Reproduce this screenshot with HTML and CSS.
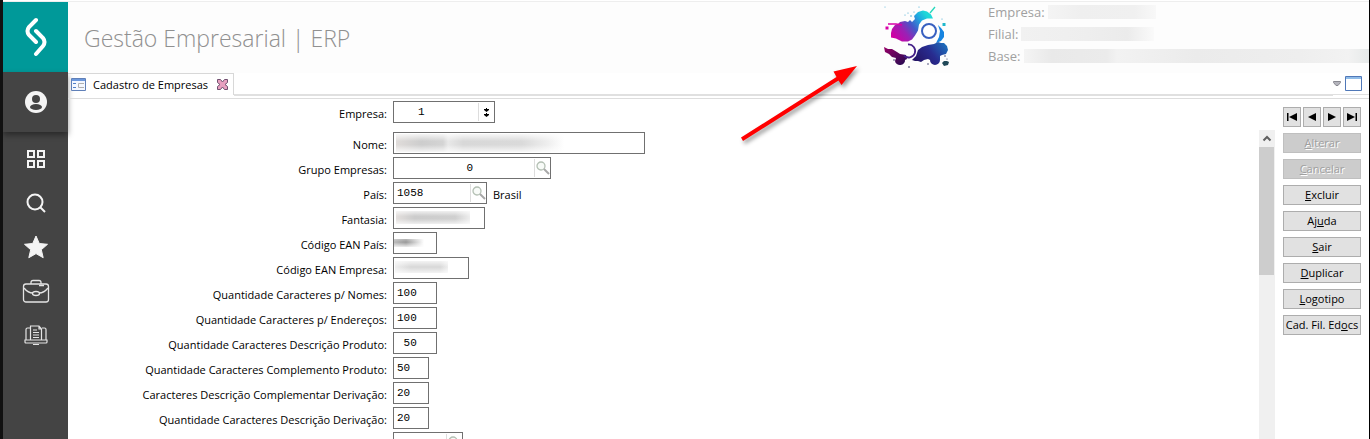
FILE: index.html
```html
<!DOCTYPE html>
<html lang="pt-BR">
<head>
    <meta charset="UTF-8">
    <meta name="viewport" content="width=device-width, initial-scale=1.0">
    <title>Gestão Empresarial | ERP</title>
    <link rel="stylesheet" href="styles.css">
</head>
<body>
    <aside class="sidebar">
        <a href="#" class="brand" aria-label="Início">
            <svg width="22" height="40" viewBox="0 0 22 40" fill="none" stroke="#fff" stroke-width="4" stroke-linecap="round">
                <path d="M11 3L4 10Q1 14 4 18L11 25"/>
                <path d="M11 14L18 21Q21 25 18 29L11 37"/>
            </svg>
        </a>
        <a href="#" class="user" aria-label="Usuário">
            <svg width="22" height="22" viewBox="0 0 22 22">
                <circle cx="11" cy="11" r="11" fill="#f4f4f4"/>
                <circle cx="11" cy="8" r="4" fill="#444"/>
                <ellipse cx="11" cy="16" rx="6" ry="3" fill="#444"/>
            </svg>
        </a>
        <nav class="menu">
            <a href="#" aria-label="Módulos">
                <svg width="20" height="20" viewBox="0 0 20 20" fill="none" stroke="#f4f4f4" stroke-width="2">
                    <path d="M2 2h6v6H2zM12 2h6v6h-6zM2 12h6v6H2zM12 12h6v6h-6z"/>
                </svg>
            </a>
            <a href="#" aria-label="Pesquisar">
                <svg width="20" height="20" viewBox="0 0 20 20" fill="none" stroke="#f4f4f4" stroke-width="2">
                    <circle cx="9" cy="9" r="7.5"/>
                    <path d="M14 14l5 5"/>
                </svg>
            </a>
            <a href="#" aria-label="Favoritos">
                <svg width="24" height="24" viewBox="0 0 24 24" fill="#f4f4f4" stroke="#f4f4f4" stroke-linejoin="round">
                    <path d="M12 1l3.300 7.500 8.200.8-6.200 5.400 1.900 8L12 18.600 4.800 22.700l1.900-8L.5 9.300l8.200-.8z"/>
                </svg>
            </a>
            <a href="#" aria-label="Processos">
                <svg width="28" height="24" viewBox="0 0 28 24" fill="none" stroke="#e4e4e4" stroke-width="1.300">
                    <rect x="1.500" y="5" width="25" height="18" rx="2.500"/>
                    <path d="M9 5V3.500Q9 1.500 11 1.500h6Q19 1.500 19 3.500V5M2 9q4 5 9 5M26 9q-4 5-9 5M17 6.500h5"/>
                    <ellipse cx="14" cy="14.500" rx="3.500" ry="2"/>
                </svg>
            </a>
            <a href="#" aria-label="Documentos">
                <svg width="24" height="20" viewBox="0 0 24 20" fill="none" stroke="#e4e4e4" stroke-width="1.200">
                    <path d="M6 3H3.500Q2 3 2 4.500V15M18 3h2.500Q22 3 22 4.500V15M1 15h22v2q0 1-1 1H2q-1 0-1-1zM9 19.500h6M6.500 15V1H15l2.500 3v11M15 1v3h2.500M9 5h4M9 7.500h6M9 10h6M9 12.500h6"/>
                </svg>
            </a>
        </nav>
    </aside>

    <div class="page">
        <header class="header">
            <h1>Gestão Empresarial | ERP</h1>
            <div class="company">
                <svg class="company-logo" width="72" height="68" viewBox="0 0 72 68">
                    <defs>
                        <linearGradient id="splash" gradientUnits="userSpaceOnUse" x1="14" y1="36" x2="46" y2="12">
                            <stop offset="0" stop-color="#d000a4"/>
                            <stop offset=".3" stop-color="#9c20b4"/>
                            <stop offset=".55" stop-color="#4458c8"/>
                            <stop offset=".8" stop-color="#20a8e0"/>
                            <stop offset="1" stop-color="#20d8d8"/>
                        </linearGradient>
                        <linearGradient id="right" gradientUnits="userSpaceOnUse" x1="36" y1="60" x2="64" y2="38">
                            <stop offset="0" stop-color="#241464"/>
                            <stop offset=".5" stop-color="#282c90"/>
                            <stop offset="1" stop-color="#1c74c0"/>
                        </linearGradient>
                        <linearGradient id="left" x1="0" y1="0" x2="1" y2="1">
                            <stop offset="0" stop-color="#980068"/>
                            <stop offset="1" stop-color="#200c50"/>
                        </linearGradient>
                    </defs>
                    <path fill="url(#splash)" d="M11 31l1-4 3-4 3-1 2-2 5-1 3 1 2-2 2 2 3-3-1-3 4-4 5-1.500 4 1 4 3 2 4-6 0-5 2-3 4-1 6-3 5-3 4-4 2-6 0-6-3-5-1z"/>
                    <path fill="none" stroke="#d800a8" stroke-width="1.500" d="M8 22h8l6 1"/>
                    <path stroke="#24d8bc" stroke-width="1.300" d="M50 11l5-6"/>
                    <path fill="#1684e0" d="M58 23l3 3 3 4 0 5-3 4-5 2 3-6 1-6z"/>
                    <path fill="url(#right)" d="M32 58l4-4 2-6 4-3 6-2 6-1 4-2 3 1 3 0 3 3 1 4-2 4-4 1-2 1 0 4a5 5 0 0 1-10 0l-2-1-4 1-3 2-3-1-3 0z"/>
                    <path fill="url(#left)" d="M4 45l4 2 4 0 5 3 3 2 6 1 1 4-2 1a5 4.500 0 0 1-10 1l1-3-4-1-3-3-4-2z"/>
                    <path fill="none" stroke="#442088" stroke-width="1.800" d="M28 42.500a6.500 6.500 0 1 1-4 11"/>
                    <circle cx="49" cy="29" r="7" fill="#fff" stroke="#3860c0" stroke-width="2"/>
                    <path fill="#20b8cc" d="M62.500 21h3v3h-3z"/>
                    <path fill="#d800a8" d="M5.500 24.500h3v3h-3z"/>
                    <g fill="#40a8d0">
                        <circle cx="31" cy="14" r=".8"/><circle cx="28" cy="11" r=".6"/><circle cx="34" cy="10" r=".6"/>
                        <circle cx="25" cy="13" r=".6"/><circle cx="39" cy="5" r=".6"/><circle cx="62" cy="17" r=".6"/>
                        <circle cx="5" cy="5" r=".5"/>
                    </g>
                    <path fill="#204858" d="M62 61l2-2 3 0 2 1-1 3-4 1z"/>
                    <g fill="#181850">
                        <circle cx="29" cy="65" r=".8"/><circle cx="14" cy="58" r=".7"/><circle cx="48" cy="62" r=".7"/>
                        <circle cx="65" cy="54" r=".7"/><circle cx="67" cy="57" r=".5"/>
                    </g>
                </svg>
                <svg class="arrow" width="130" height="90" viewBox="0 0 130 90">
                    <path fill="red" d="M11 76.500L106.500 16 103.500 10.500 127 5 111.500 24 108.500 19.500 13 80z"/>
                </svg>
                <dl class="session">
                    <div><dt>Empresa:</dt><dd class="mask mask-company"></dd></div>
                    <div><dt>Filial:</dt><dd class="mask mask-branch"></dd></div>
                    <div><dt>Base:</dt><dd class="mask mask-base"></dd></div>
                </dl>
            </div>
        </header>

        <div class="tabs">
            <div class="tab">
                <svg width="15" height="13" viewBox="0 0 15 13">
                    <path fill="#f4f8ff" stroke="#6080b8" d="M.5.500h14v12H.5z"/>
                    <path fill="#6c98dc" d="M1 1h13v2H1z"/>
                    <path stroke="#5080c8" d="M2 5.500h3M2 9.500h3"/>
                    <path fill="none" stroke="#b0b0b0" d="M13 5.500H7.500v4H13"/>
                </svg>
                <span>Cadastro de Empresas</span>
                <button type="button" class="tab-close" aria-label="Fechar">
                    <svg width="11" height="11" viewBox="0 0 11 11">
                        <path fill="#e8a0c0" stroke="#705070" d="M.5.500h3l2 2.500 2-2.500h3v3L8 5.500l2.500 2v3h-3l-2-2.500-2 2.500h-3v-3l2.500-2-2.500-2z"/>
                    </svg>
                </button>
            </div>
            <div class="tab-line"></div>
            <div class="tab-tools">
                <svg width="8" height="6" viewBox="0 0 8 6"><path fill="#b4b4bc" stroke="#888890" d="M.5.500h7v1L5 4.500H3L.5 1.500z"/></svg>
                <svg width="17" height="15" viewBox="0 0 17 15"><path fill="#fff" stroke="#5078b8" d="M.5.500h16v14H.5z"/><path fill="#90bce8" d="M1 1h15v2H1z"/></svg>
            </div>
        </div>

        <main class="content">
            <form class="form">
                <div class="row first">
                    <label for="empresa">Empresa:</label>
                    <div class="field w102">
                        <input type="text" id="empresa" class="indent" value="1">
                        <button type="button" class="spin" aria-label="Selecionar empresa">
                            <svg width="5" height="9" viewBox="0 0 5 9"><path d="M0 1h2V0h1v1h2v1L2.500 4 0 2zM0 6h2V5h1v1h2v1L2.500 9 0 7z"/></svg>
                        </button>
                    </div>
                </div>
                <div class="scroll">
                    <div class="rows">
                        <div class="row">
                            <label for="nome">Nome:</label>
                            <div class="field w252"><input type="text" id="nome" class="blot blot-nome"></div>
                        </div>
                        <div class="row">
                            <label for="grupo">Grupo Empresas:</label>
                            <div class="field w158">
                                <input type="text" id="grupo" class="number" value="0">
                                <button type="button" class="lookup" aria-label="Pesquisar grupo"><svg width="14" height="14"><use href="#lens"/></svg></button>
                            </div>
                        </div>
                        <div class="row">
                            <label for="pais">País:</label>
                            <div class="field w94">
                                <input type="text" id="pais" value="1058">
                                <button type="button" class="lookup" aria-label="Pesquisar país"><svg width="14" height="14"><use href="#lens"/></svg></button>
                            </div>
                            <output for="pais">Brasil</output>
                        </div>
                        <div class="row">
                            <label for="fantasia">Fantasia:</label>
                            <div class="field w92"><input type="text" id="fantasia" class="blot blot-fantasia"></div>
                        </div>
                        <div class="row">
                            <label for="ean-pais">Código EAN País:</label>
                            <div class="field w44"><input type="text" id="ean-pais" class="blot blot-pais"></div>
                        </div>
                        <div class="row">
                            <label for="ean-empresa">Código EAN Empresa:</label>
                            <div class="field w76"><input type="text" id="ean-empresa" class="blot blot-empresa"></div>
                        </div>
                        <div class="row">
                            <label for="nomes">Quantidade Caracteres p/ Nomes:</label>
                            <div class="field w44"><input type="text" id="nomes" value="100"></div>
                        </div>
                        <div class="row">
                            <label for="enderecos">Quantidade Caracteres p/ Endereços:</label>
                            <div class="field w44"><input type="text" id="enderecos" value="100"></div>
                        </div>
                        <div class="row">
                            <label for="desc-produto">Quantidade Caracteres Descrição Produto:</label>
                            <div class="field w44"><input type="text" id="desc-produto" value=" 50"></div>
                        </div>
                        <div class="row">
                            <label for="compl-produto">Quantidade Caracteres Complemento Produto:</label>
                            <div class="field w36"><input type="text" id="compl-produto" value="50"></div>
                        </div>
                        <div class="row">
                            <label for="compl-derivacao">Caracteres Descrição Complementar Derivação:</label>
                            <div class="field w36"><input type="text" id="compl-derivacao" value="20"></div>
                        </div>
                        <div class="row">
                            <label for="desc-derivacao">Quantidade Caracteres Descrição Derivação:</label>
                            <div class="field w36"><input type="text" id="desc-derivacao" value="20"></div>
                        </div>
                        <div class="row">
                            <span class="blank"></span>
                            <div class="field w70">
                                <input type="text" aria-label="Código">
                                <button type="button" class="lookup" aria-label="Pesquisar código"><svg width="14" height="14"><use href="#lens"/></svg></button>
                            </div>
                        </div>
                    </div>
                    <div class="scrollbar">
                        <svg width="16" height="17" viewBox="0 0 16 17" fill="none" stroke="#606060" stroke-width="2"><path d="M4.500 10.500L8 7l3.500 3.500"/></svg>
                        <div class="thumb"></div>
                    </div>
                </div>
            </form>
            <div class="actions">
                <div class="pager">
                    <button type="button" aria-label="Primeiro"><svg width="10" height="8" viewBox="0 0 10 8"><path d="M0 0h1.500v8H0zM10 0v8L2 4z"/></svg></button>
                    <button type="button" aria-label="Anterior"><svg width="8" height="8" viewBox="0 0 8 8"><path d="M8 0v8L0 4z"/></svg></button>
                    <button type="button" aria-label="Próximo"><svg width="8" height="8" viewBox="0 0 8 8"><path d="M0 0v8l8-4z"/></svg></button>
                    <button type="button" aria-label="Último"><svg width="10" height="8" viewBox="0 0 10 8"><path d="M8.500 0H10v8H8.500zM0 0v8l8-4z"/></svg></button>
                </div>
                <button type="button" disabled><u>A</u>lterar</button>
                <button type="button" disabled><u>C</u>ancelar</button>
                <button type="button"><u>E</u>xcluir</button>
                <button type="button">Aj<u>u</u>da</button>
                <button type="button"><u>S</u>air</button>
                <button type="button"><u>D</u>uplicar</button>
                <button type="button"><u>L</u>ogotipo</button>
                <button type="button">Cad. Fil. Ed<u>o</u>cs</button>
            </div>
        </main>
    </div>

    <svg class="sprite" width="0" height="0">
        <symbol id="lens" viewBox="0 0 14 14">
            <circle cx="5" cy="5" r="4" fill="#f8fbf8" stroke="#b4c0b4" stroke-width="1.300"/>
            <path stroke="#a8a8a8" stroke-width="2" d="M8 8l5 5"/>
        </symbol>
    </svg>
</body>
</html>
```

FILE: styles.css
```css
* {
    box-sizing: border-box;
}
body {
    display: flex;
    height: 100vh;
    margin: 0;
    padding-top: 2px;
    overflow: hidden;
    border-left: 3px solid #111;
    border-right: 1px solid #000;
    background: linear-gradient(#fff 1px, #eee 1px, #eee 2px, #fff 2px);
    font-family: "Open Sans", "Noto Sans", sans-serif;
    font-size: 11px;
    color: #000;
}
svg {
    display: block;
}
button {
    padding: 0;
    font: inherit;
    color: inherit;
    cursor: pointer;
}
.sprite {
    position: absolute;
}

/* sidebar */
.sidebar {
    flex: none;
    width: 65px;
    background: #444;
}
.sidebar a {
    display: flex;
    align-items: center;
    justify-content: center;
}
.sidebar .brand {
    height: 70px;
    background: #099;
}
.sidebar .user {
    height: 60px;
    box-shadow: 0 3px 6px rgba(0, 0, 0, 0.4);
}
.menu {
    padding-top: 5px;
}
.menu a {
    height: 44px;
}

/* header */
.page {
    flex: 1;
    min-width: 0;
    display: flex;
    flex-direction: column;
}
.header {
    flex: none;
    display: flex;
    justify-content: space-between;
    height: 71px;
    padding-left: 16px;
    background: #fdfdfd;
    color: #a0a0a0;
}
.header h1 {
    margin: 0;
    font-size: 23px;
    font-weight: 300;
    line-height: 72px;
    color: #909090;
    white-space: nowrap;
}
.company {
    position: relative;
    display: flex;
    flex: none;
    gap: 36px;
    width: 489px;
}
.company-logo {
    flex: none;
}
.arrow {
    position: absolute;
    top: 59px;
    left: -150px;
    filter: drop-shadow(2px 3px 2px rgba(0, 0, 0, 0.4));
}
.session {
    flex: 1;
    margin: 0;
    font-size: 13px;
    line-height: 22px;
}
.session div {
    display: flex;
    align-items: center;
    gap: 3px;
    height: 22px;
    padding-bottom: 2px;
}
.mask {
    height: 14px;
    margin: 0;
}
.mask-company {
    width: 108px;
    background: linear-gradient(90deg, #f4f4f4, #efefef 30%, #f0f0f0 80%, #f8f8f8);
}
.mask-branch {
    width: 133px;
    background: linear-gradient(90deg, #f1f1f1, #eee 50%, #ebebeb 80%, #fafafa);
}
.mask-base {
    flex: 1;
    background: linear-gradient(90deg, #f4f4f4, #e9e9e9 8%, #ebebeb 24%, #f2f2f2 27%, #ebebeb 50%, #eee 80%, #f2f2f2 94%, #e6e9e9);
}

/* tabs */
.tabs {
    flex: none;
    display: flex;
    height: 26px;
    border-bottom: 1px solid #ddd;
}
.tab {
    display: flex;
    align-items: center;
    width: 166px;
    height: 22px;
    padding-left: 3px;
    border-top: 1px solid #d8d8d8;
    border-right: 1px solid #d8d8d8;
}
.tab span {
    margin: 0 9px 0 7px;
    white-space: nowrap;
}
.tab-close {
    border: 0;
    background: none;
}
.tab-line {
    flex: 1;
    height: 23px;
    border-bottom: 2px solid #e0e0e0;
}
.tab-tools {
    display: flex;
    align-items: center;
    gap: 4px;
    height: 22px;
    padding-right: 7px;
    border-bottom: 1px solid #e0e0e0;
}

/* form */
.content {
    flex: 1;
    min-height: 0;
    display: flex;
}
.form {
    flex: 1;
    min-width: 0;
    display: flex;
    flex-direction: column;
}
.row {
    display: flex;
    flex: none;
    height: 22px;
    margin-bottom: 3px;
}
.first {
    margin: 2px 0 7px;
}
.row label,
.blank {
    width: 319px;
    text-align: right;
    line-height: 26px;
}
.row output {
    margin-left: 6px;
    line-height: 26px;
}
.field {
    display: flex;
    margin-left: 6px;
    border: 1px solid #707070;
    background: #fff;
}
.field input {
    flex: 1;
    min-width: 0;
    padding: 0 0 1px 3px;
    border: 0;
    outline: 0;
    background-color: transparent;
    background-repeat: no-repeat;
    font-family: "Liberation Mono", monospace;
    font-size: 11px;
    color: #000;
}
.field .indent {
    padding-left: 24px;
}
.field .number {
    padding-right: 61px;
    text-align: right;
}
.field button {
    display: flex;
    align-items: center;
    justify-content: center;
    width: 16px;
    margin: 1px 0;
    border: 0;
    border-left: 1px solid #ddd;
    background: none;
}
.w36 { width: 36px; }
.w44 { width: 44px; }
.w70 { width: 70px; }
.w76 { width: 76px; }
.w92 { width: 92px; }
.w94 { width: 94px; }
.w102 { width: 102px; }
.w158 { width: 158px; }
.w252 { width: 252px; }

.blot-nome {
    background-image: linear-gradient(rgba(255, 255, 255, 0.8), transparent 40%, transparent 60%, rgba(255, 255, 255, 0.8)), linear-gradient(90deg, #e0dcda, #cdcdcd 15%, #d4d4d4 28%, #e8e8e8 31%, #d8d8d8 40%, #dadada 75%, #eee 90%, #fff);
    background-position: 2px 1px;
    background-size: 168px 18px;
}
.blot-fantasia {
    background-image: linear-gradient(rgba(255, 255, 255, 0.7), transparent 40%, transparent 60%, rgba(255, 255, 255, 0.7)), linear-gradient(90deg, #e4e0de, #ccc 25%, #d0d0d0 80%, #eee);
    background-position: 2px 3px;
    background-size: 74px 13px;
}
.blot-pais {
    background-image: linear-gradient(rgba(255, 255, 255, 0.3), transparent 40%, rgba(255, 255, 255, 0.8)), linear-gradient(90deg, #b8b8b8, #989898 40%, #ccc 70%, #fff);
    background-position: 0 6px;
    background-size: 30px 8px;
}
.blot-empresa {
    background-image: linear-gradient(rgba(255, 255, 255, 0.7), transparent 50%, rgba(255, 255, 255, 0.7)), linear-gradient(90deg, #eee, #d8d8d8 30%, #d8d8d8 85%, #eee);
    background-position: 1px 3px;
    background-size: 53px 12px;
}

/* scroll area */
.scroll {
    flex: 1;
    min-height: 0;
    display: flex;
}
.rows {
    flex: 1;
    padding-top: 2px;
    overflow: hidden;
}
.scrollbar {
    width: 16px;
    background: #f0f0f0;
}
.thumb {
    width: 15px;
    height: 128px;
    background: #cdcdcd;
}

/* actions */
.actions {
    flex: none;
    display: flex;
    flex-direction: column;
    gap: 6px;
    width: 94px;
    padding: 8px 8px 0;
}
.actions button {
    height: 20px;
    border: 1px solid #adadad;
    background: #e1e1e1;
    line-height: 18px;
    white-space: nowrap;
}
.actions button:hover {
    background: #e5f1fb;
}
.actions button:disabled {
    border-color: #bfbfbf;
    background: #ccc;
    color: #a0a0a0;
    text-shadow: 1px 1px #fff;
    cursor: default;
}
.pager {
    display: flex;
    gap: 2px;
}
.pager button {
    flex: 1;
    display: flex;
    align-items: center;
    justify-content: center;
}
```
